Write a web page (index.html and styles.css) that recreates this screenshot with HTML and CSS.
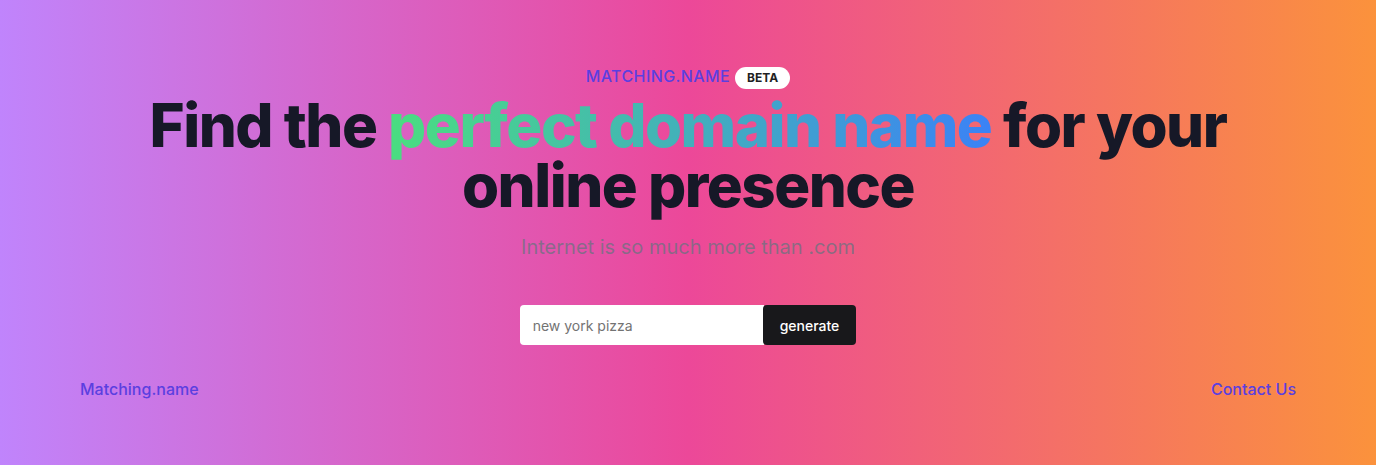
FILE: index.html
```html
<!DOCTYPE html>
<html lang="en">
<head>
<meta charset="utf-8">
<title>Matching.name</title>
<link rel="stylesheet" href="styles.css">
</head>
<body>
<div class="page">
  <main class="hero">
    <div class="brand">
      <span class="brand-name">MATCHING.NAME</span>
      <span class="badge">BETA</span>
    </div>
    <h1 class="title">Find the <span class="grad">perfect domain name</span> for your<br>online presence</h1>
    <p class="subtitle">Internet is so much more than .com</p>
    <form class="search">
      <input class="search-input" type="text" placeholder="new york pizza">
      <button class="search-btn" type="button">generate</button>
    </form>
  </main>
  <footer class="footer">
    <a class="footer-link" href="#">Matching.name</a>
    <a class="footer-link" href="#">Contact Us</a>
  </footer>
</div>
</body>
</html>
```

FILE: styles.css
```css
* { box-sizing: border-box; }
html, body { margin: 0; padding: 0; }
body {
  font-family: Inter, "Noto Sans", sans-serif;
  background: linear-gradient(to right, #c084fc 0%, #ec4899 50%, #fb923c 100%);
  min-height: 465px;
}
.page {
  display: flex;
  flex-direction: column;
  min-height: 465px;
}
.hero {
  display: flex;
  flex-direction: column;
  align-items: center;
  padding-top: 64px;
}
.brand {
  display: flex;
  align-items: center;
  gap: 5px;
  height: 24px;
}
.brand-name {
  font-size: 16px;
  font-weight: 500;
  letter-spacing: 0.025em;
  color: #5b3fe0;
  line-height: 24px;
}
.badge {
  background: #fff;
  color: #1f1f23;
  font-size: 12px;
  font-weight: 700;
  line-height: 22px;
  height: 22px;
  padding: 0 12px;
  border-radius: 11px;
  margin-top: 3px;
}
.title {
  margin: 7px 0 0;
  font-size: 60px;
  line-height: 60px;
  font-weight: 800;
  letter-spacing: -0.025em;
  color: #161827;
  text-align: center;
}
.grad {
  background: linear-gradient(to right, #4ade80, #3b82f6);
  -webkit-background-clip: text;
  background-clip: text;
  color: transparent;
}
.subtitle {
  margin: 18px 0 0;
  font-size: 20px;
  line-height: 28px;
  color: rgba(107, 114, 128, 0.75);
}
.search {
  display: flex;
  margin-top: 44px;
}
.search-input {
  width: 244px;
  height: 40px;
  border: none;
  border-radius: 4px 0 0 4px;
  padding: 0 13px;
  font-family: inherit;
  font-size: 14px;
  color: #111;
  background: #fff;
  outline: none;
}
.search-input::placeholder { color: #737373; }
.search-btn {
  height: 40px;
  border: none;
  border-radius: 4px;
  background: #18181b;
  color: #fff;
  font-family: inherit;
  font-size: 14px;
  font-weight: 500;
  padding: 0 17px;
  margin-left: -1px;
}
.footer {
  display: flex;
  justify-content: space-between;
  padding: 32px 80px 0;
}
.footer-link {
  font-size: 16px;
  font-weight: 500;
  line-height: 24px;
  color: #5b3fe0;
  text-decoration: none;
}
```
